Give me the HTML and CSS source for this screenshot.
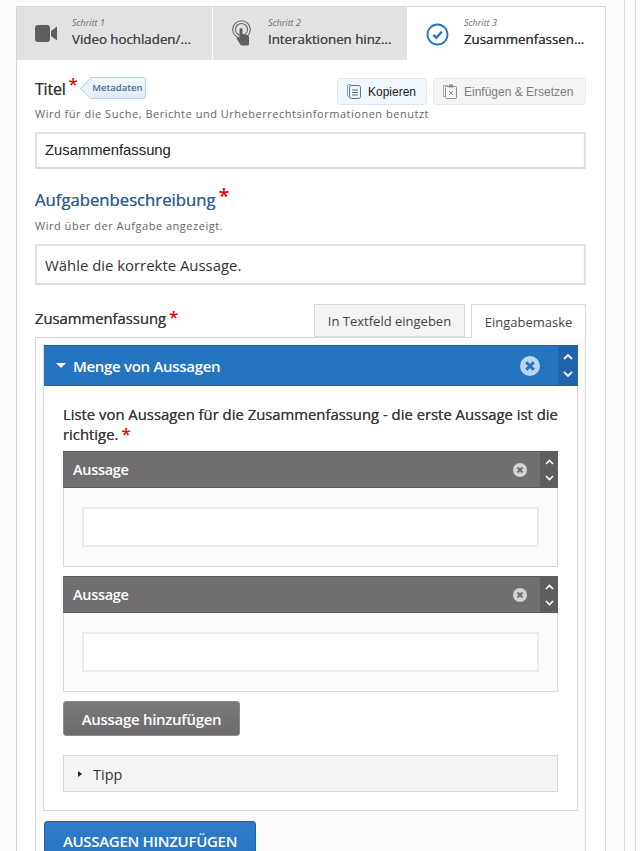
FILE: index.html
```html
<!DOCTYPE html>
<html lang="de">
<head>
<meta charset="utf-8">
<title>Zusammenfassung</title>
<link rel="stylesheet" href="styles.css">
</head>
<body>
<div class="page">
  <main class="panel">
    <nav class="steps">
      <div class="step s1">
        <svg class="step-icon" width="22" height="17" viewBox="0 0 22 17"><rect x="0" y="0" width="15" height="17" rx="3" fill="#5f5f5f"/><path d="M16 6l6-4.500v14L16 11z" fill="#5f5f5f"/></svg>
        <div class="step-text"><i>Schritt 1</i><b>Video hochladen/...</b></div>
      </div>
      <div class="step s2">
        <svg class="step-icon" width="20" height="26" viewBox="0 0 20 26"><circle cx="9.500" cy="9.500" r="8.800" fill="none" stroke="#666" stroke-width="1.100"/><circle cx="9.500" cy="9.500" r="6" fill="none" stroke="#666" stroke-width="1.100"/><path d="M7.500 9.500a1.500 1.500 0 013 0v4.500l5 1.200c1 .3 1.500 1 1.500 2V24a1.500 1.500 0 01-1.500 1.500H10a2 2 0 01-1.600-.8L4.800 19c-.7-1 .5-2.200 1.500-1.500l1.200 1z" fill="#5f5f5f"/></svg>
        <div class="step-text"><i>Schritt 2</i><b>Interaktionen hinz...</b></div>
      </div>
      <div class="step s3 active">
        <svg class="step-icon" width="23" height="23" viewBox="0 0 23 23"><circle cx="11.500" cy="11.500" r="10" fill="none" stroke="#2574c0" stroke-width="1.800"/><path d="M7.300 11.800l3 3 5.500-6" fill="none" stroke="#2574c0" stroke-width="2.400"/></svg>
        <div class="step-text"><i>Schritt 3</i><b>Zusammenfassen...</b></div>
      </div>
    </nav>

    <section class="content">
      <div class="title-row">
        <div class="title-left">
          <span class="label">Titel</span><span class="req">*</span>
          <span class="meta">Metadaten</span>
        </div>
        <div class="actions">
          <button class="act copy">
            <svg width="14" height="15" viewBox="0 0 14 15"><rect x=".5" y=".5" width="4" height="12" rx="1.500" fill="none" stroke="#8aa0b4"/><rect x="2.500" y="1.500" width="11" height="13" rx="2" fill="#eef6fc" stroke="#5b7590"/><path d="M5 6h6M5 8.500h6M5 11h6" stroke="#5b7590"/></svg>
            Kopieren
          </button>
          <button class="act paste">
            <svg width="14" height="15" viewBox="0 0 14 15"><rect x=".5" y="1.500" width="4" height="11" fill="none" stroke="#aaa"/><rect x="2.500" y="2.500" width="11" height="12" rx="1" fill="#f4f4f4" stroke="#8b8b8b"/><rect x="6" y=".5" width="4" height="3" fill="#8b8b8b"/><path d="M6 7l4 4M10 7l-4 4" stroke="#8b8b8b"/></svg>
            Einfügen &amp; Ersetzen
          </button>
        </div>
      </div>
      <p class="hint hint-title">Wird für die Suche, Berichte und Urheberrechtsinformationen benutzt</p>
      <div class="input arial">Zusammenfassung</div>

      <div class="label-blue"><span>Aufgabenbeschreibung</span><span class="req">*</span></div>
      <p class="hint hint-task">Wird über der Aufgabe angezeigt.</p>
      <div class="input">Wähle die korrekte Aussage.</div>

      <div class="tabs-row">
        <div class="tabs-label"><span class="label-sm">Zusammenfassung</span><span class="req">*</span></div>
        <div class="tab">In Textfeld eingeben</div>
        <div class="tab current">Eingabemaske</div>
      </div>

      <div class="form-box">
        <div class="group">
          <header class="group-head">
            <span class="caret"></span>
            <span class="group-title">Menge von Aussagen</span>
            <svg class="rm-big" width="20" height="20" viewBox="0 0 20 20"><circle cx="10" cy="10" r="10" fill="#bcd7f0"/><path d="M6.200 6.200l7.600 7.600M13.800 6.200l-7.600 7.600" stroke="#2574c0" stroke-width="3"/></svg>
            <div class="order blue-order">
              <svg width="10" height="7" viewBox="0 0 10 7"><path d="M1 6l4-4 4 4" fill="none" stroke="#fff" stroke-width="1.800"/></svg>
              <svg width="10" height="7" viewBox="0 0 10 7"><path d="M1 1l4 4 4-4" fill="none" stroke="#fff" stroke-width="1.800"/></svg>
            </div>
          </header>
          <div class="group-body">
            <p class="list-label">Liste von Aussagen für die Zusammenfassung - die erste Aussage ist die richtige.<span class="req small">*</span></p>

            <div class="item">
              <header class="item-head">
                <span class="item-title">Aussage</span>
                <svg class="rm-small" width="14" height="14" viewBox="0 0 14 14"><circle cx="7" cy="7" r="7" fill="#d3d3d3"/><path d="M4.500 4.500l5 5M9.500 4.500l-5 5" stroke="#706e70" stroke-width="2"/></svg>
                <div class="order grey-order">
                  <svg width="9" height="6" viewBox="0 0 9 6"><path d="M1 5l3.500-3.500L8 5" fill="none" stroke="#fff" stroke-width="1.600"/></svg>
                  <svg width="9" height="6" viewBox="0 0 9 6"><path d="M1 1l3.500 3.500L8 1" fill="none" stroke="#fff" stroke-width="1.600"/></svg>
                </div>
              </header>
              <div class="item-body"><div class="item-input"></div></div>
            </div>

            <div class="item">
              <header class="item-head">
                <span class="item-title">Aussage</span>
                <svg class="rm-small" width="14" height="14" viewBox="0 0 14 14"><circle cx="7" cy="7" r="7" fill="#d3d3d3"/><path d="M4.500 4.500l5 5M9.500 4.500l-5 5" stroke="#706e70" stroke-width="2"/></svg>
                <div class="order grey-order">
                  <svg width="9" height="6" viewBox="0 0 9 6"><path d="M1 5l3.500-3.500L8 5" fill="none" stroke="#fff" stroke-width="1.600"/></svg>
                  <svg width="9" height="6" viewBox="0 0 9 6"><path d="M1 1l3.500 3.500L8 1" fill="none" stroke="#fff" stroke-width="1.600"/></svg>
                </div>
              </header>
              <div class="item-body"><div class="item-input"></div></div>
            </div>

            <button class="btn-grey">Aussage hinzufügen</button>

            <div class="tipp"><span class="tipp-caret"></span><span>Tipp</span></div>
          </div>
        </div>
        <button class="btn-blue">AUSSAGEN HINZUFÜGEN</button>
      </div>
    </section>
  </main>
  <div class="side"></div>
</div>
</body>
</html>
```

FILE: styles.css
```css
* { box-sizing: border-box; }
html, body { margin: 0; padding: 0; height: 851px; overflow: hidden; background: #fff; }
body { font-family: "Open Sans", sans-serif; color: #333; }
button { font-family: inherit; cursor: pointer; }

.page { display: flex; align-items: flex-start; height: 851px; padding: 6px 0 0 16px; background: #fcfcfc; overflow: hidden; }
.panel { width: 590px; flex: none; height: 900px; background: #fff; border: 1px solid #d6d6d6; }
.side { width: 12px; height: 900px; margin-left: 18px; margin-top: -6px; background: #fbfbfb; border-left: 1px solid #d8d8d8; border-right: 1px solid #d8d8d8; }

.steps { display: flex; height: 53px; }
.step { display: flex; align-items: center; background: #e2e2e2; height: 53px; }
.s1 { width: 196px; padding-left: 18px; border-right: 1px solid #fff; }
.s2 { width: 194px; padding-left: 19px; }
.s3 { flex: 1; padding-left: 19px; }
.step.active { background: #fff; }
.step-icon { flex: none; }
.s1 .step-icon { margin-right: 15px; margin-top: -1px; }
.s2 .step-icon { margin-right: 16px; margin-top: -1px; }
.s3 .step-icon { margin-right: 15px; margin-top: 1px; }
.step-text { display: flex; flex-direction: column; white-space: nowrap; margin-top: -1px; }
.step-text i { font-size: 9px; line-height: 12px; color: #6a6a6a; }
.step-text b { font-weight: 500; font-size: 13.300px; line-height: 20px; color: #4a4a4a; text-shadow: 0 0 .5px currentColor; }
.s3 b { color: #333; }

.content { padding: 18px 18px 0 18px; }
.title-row { display: flex; justify-content: space-between; align-items: flex-start; height: 28px; }
.title-left { display: flex; align-items: flex-start; }
.label { font-size: 16px; font-weight: 500; line-height: 22px; color: #3a3a3a; letter-spacing: -.2px; text-shadow: 0 0 .5px currentColor; }
.req { color: #e00; font-size: 17px; line-height: 24px; font-weight: 600; margin-left: 3px; }
.title-left .req { margin-top: -6px; }
.meta { position: relative; z-index: 0; display: block; margin: -1px 0 0 12px; height: 22px; width: 56px; text-align: center; font-size: 9.500px; line-height: 20px; font-weight: 600; color: #4d6a8f; background: linear-gradient(#f5f9fd, #dfeaf6); border: 1px solid #bcd2e6; border-left: 0; border-radius: 0 3px 3px 0; }
.meta::before { content: ""; position: absolute; z-index: -1; left: -7px; top: 3px; width: 14px; height: 14px; transform: rotate(45deg); background: #ecf2f9; border-left: 1px solid #bcd2e6; border-bottom: 1px solid #bcd2e6; }
.actions { display: flex; gap: 6px; margin-right: 1px; }
.act { display: flex; align-items: center; gap: 7px; height: 27px; border-radius: 3px; font-size: 12px; font-family: "Liberation Sans", sans-serif; padding: 0 9px; }
.copy { width: 90px; background: #f1f8fd; border: 1px solid #dbe9f3; color: #222; }
.paste { width: 153px; background: #f4f4f4; border: 1px solid #e9e9e9; color: #7d7d7d; white-space: nowrap; }
.hint { margin: 0; font-size: 11px; line-height: 14px; color: #666; letter-spacing: .52px; }
.hint-title { margin-top: 1px; }
.input { height: 37px; margin: 11px 1px 0 0; background: #fff; border: 2px solid #e2e2e2; border-bottom-color: #dcdcdc; box-shadow: inset 0 0 4px #f2f2f2; padding: 0 8px; line-height: 32px; font-size: 15px; color: #333; }
.input.arial { font-family: "Liberation Sans", sans-serif; font-size: 14.800px; line-height: 33px; color: #222; }
.label-blue { display: flex; align-items: flex-start; height: 30px; margin-top: 16px; color: #2f5f93; font-size: 16.700px; line-height: 30px; font-weight: 500; text-shadow: 0 0 .5px currentColor; }
.label-blue .req { line-height: 18px; font-size: 20px; margin-left: 3px; margin-top: 2px; text-shadow: none; }
.hint-task { margin-top: 4px; }
.content > .input:not(.arial) { height: 41px; margin-top: 11px; line-height: 38px; font-size: 14.900px; }

.tabs-row { display: flex; height: 34px; margin-top: 19px; position: relative; z-index: 1; margin-right: 1px; }
.tabs-label { flex: 1; display: flex; align-items: flex-start; margin-top: 2px; }
.label-sm { font-size: 14.800px; font-weight: 500; line-height: 24px; color: #3a3a3a; text-shadow: 0 0 .5px currentColor; }
.tabs-label .req { font-size: 17px; line-height: 18px; margin-left: 3px; margin-top: 2px; }
.tab { height: 33px; width: 151px; background: #f4f4f4; border: 1px solid #d8d8d8; text-align: center; font-size: 13px; line-height: 32px; color: #444; }
.tab.current { width: 115px; height: 34px; margin-left: 6px; background: #fff; border-bottom: 0; line-height: 34px; }

.form-box { height: 600px; margin-top: -1px; margin-right: 1px; background: #fbfbfb; border: 1px solid #d8d8d8; padding: 7px 7px 0 7px; }
.group { background: #fff; border: 1px solid #d8d8d8; border-top: 0; }
.group-head { display: flex; align-items: center; height: 41px; margin: 0 -1px 0 0; background: #2574c0; border-top: 1px solid #1e62a6; border-bottom: 1px solid #1e62a6; color: #fff; padding-left: 12px; }
.caret { width: 0; height: 0; border-left: 5px solid transparent; border-right: 5px solid transparent; border-top: 5px solid #fff; margin-right: 7px; }
.group-title { flex: 1; font-weight: 600; font-size: 15px; letter-spacing: -.3px; }
.rm-big { margin-right: 18px; }
.order { display: flex; flex-direction: column; align-items: center; justify-content: center; align-self: stretch; }
.blue-order { width: 20px; background: #1f64a8; gap: 11px; }
.group-body { padding: 18px 19px 18px 19px; }
.list-label { margin: 0 -6px 7px 0; font-size: 14.850px; line-height: 20px; font-weight: 500; color: #3a3a3a; text-shadow: 0 0 .5px currentColor; }
.req.small { font-size: 17px; line-height: 14px; margin-left: 3px; text-shadow: none; }
.item { background: #fbfbfb; border: 1px solid #d8d8d8; border-top: 0; margin-bottom: 9px; }
.item-head { display: flex; align-items: center; height: 37px; margin: 0 -1px; background: #706e70; border-top: 1px solid #5b5a5c; border-bottom: 1px solid #5b5a5c; color: #fff; padding-left: 10px; }
.item-title { flex: 1; font-size: 14.500px; font-weight: 600; letter-spacing: -.3px; }
.rm-small { margin-right: 13px; }
.grey-order { width: 18px; background: #5e5c5e; gap: 10px; }
.item-body { padding: 19px 18px; height: 78px; }
.item-input { height: 40px; background: #fff; border: 2px solid #ebebeb; }
.btn-grey { display: block; width: 177px; height: 35px; margin: 0; padding: 0; background: linear-gradient(#7a787a, #6d6b6d); border: 1px solid #8d8b8d; border-radius: 3px; color: #fff; font-size: 15px; font-weight: 600; letter-spacing: -.3px; }
.tipp { display: flex; align-items: center; height: 37px; margin-top: 19px; padding: 1px 0 0 14px; background: #f4f4f4; border: 1px solid #d8d8d8; font-size: 14.500px; color: #333; }
.tipp-caret { width: 0; height: 0; border-top: 3px solid transparent; border-bottom: 3px solid transparent; border-left: 4px solid #222; margin-right: 11px; }
.btn-blue { display: block; width: 212px; height: 40px; margin: 10px 0 0 1px; padding: 0; background: linear-gradient(#2f7dc8, #2574c0); border: 1px solid #1e62a6; border-radius: 3px; color: #fff; font-size: 15px; font-weight: 600; letter-spacing: -.3px; }
```
